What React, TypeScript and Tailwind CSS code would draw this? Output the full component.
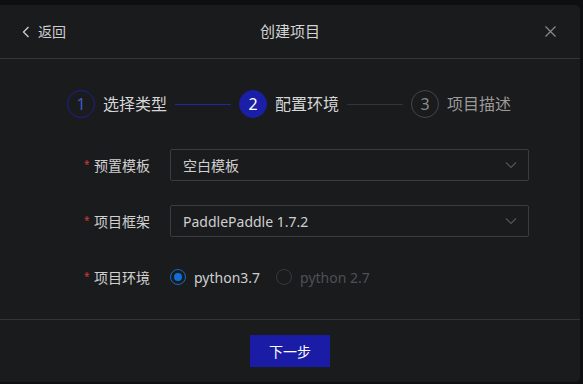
const font = { fontFamily: '"Noto Sans", "Noto Sans CJK SC", sans-serif' };

function Chevron() {
  return (
    <svg width="14" height="14" viewBox="0 0 14 14" fill="none">
      <path d="M2 4.5 L7 9.5 L12 4.5" stroke="#55575b" strokeWidth="1.1" />
    </svg>
  );
}

function Step({ n, label, state }: { n: number; label: string; state: "done" | "active" | "todo" }) {
  const circle =
    state === "active"
      ? "bg-[#1b1ea6] border-[#1b1ea6] text-white"
      : state === "done"
      ? "border-[#1c1f96] text-[#3a5bbd]"
      : "border-[#45474b] text-[#8a8a8a]";
  const text = state === "todo" ? "text-[#9a9a9a]" : "text-[#d6d6d6]";
  return (
    <div className="flex items-center gap-[8px]">
      <div className={`w-[28px] h-[28px] rounded-full border flex items-center justify-center text-[16px] ${circle}`}>
        {n}
      </div>
      <span className={`text-[16px] leading-none whitespace-nowrap ${text}`}>{label}</span>
    </div>
  );
}

function Label({ children }: { children: string }) {
  return (
    <div className="flex items-center w-[66px] shrink-0 whitespace-nowrap">
      <span className="text-[#d33a3a] text-[10px] w-[10px] leading-none -mt-[3px]">*</span>
      <span className="text-[14px] text-[#d0d0d0]">{children}</span>
    </div>
  );
}

function Select({ value }: { value: string }) {
  return (
    <div className="w-[359px] h-[32px] border border-[#3a3c40] rounded-[2px] flex items-center justify-between pl-[12px] pr-[10px]">
      <span className="text-[14px] text-[#cfcfcf]">{value}</span>
      <Chevron />
    </div>
  );
}

export default function App() {
  return (
    <div className="w-[583px] h-[384px] bg-[#0e0f10] pt-[5px] overflow-hidden" style={font}>
      <div className="w-[580px] h-[377px] bg-[#1a1b1d] rounded-r-[5px] flex flex-col">
        {/* header */}
        <div className="h-[54px] border-b border-[#333539] flex items-center justify-between px-[22px] shrink-0">
          <div className="flex items-center gap-[8px] w-[80px] text-[#cfcfcf]">
            <svg width="8" height="12" viewBox="0 0 8 12" fill="none">
              <path d="M6.5 1 L1.5 6 L6.5 11" stroke="#cfcfcf" strokeWidth="1.3" />
            </svg>
            <span className="text-[14px]">返回</span>
          </div>
          <span className="text-[15px] text-[#d4d4d4]">创建项目</span>
          <div className="w-[80px] flex justify-end pr-[2px]">
            <svg width="11" height="11" viewBox="0 0 11 11" fill="none">
              <path d="M0.5 0.5 L10.5 10.5 M10.5 0.5 L0.5 10.5" stroke="#8a8a8a" strokeWidth="1.2" />
            </svg>
          </div>
        </div>

        {/* body */}
        <div className="flex-1 flex flex-col pt-[31px]">
          <div className="flex items-center pl-[67px]">
            <Step n={1} label="选择类型" state="done" />
            <div className="w-[56px] h-px bg-[#2225a8] mx-[8px]" />
            <Step n={2} label="配置环境" state="active" />
            <div className="w-[56px] h-px bg-[#333438] mx-[8px]" />
            <Step n={3} label="项目描述" state="todo" />
          </div>

          <div className="flex flex-col gap-[24px] mt-[31px] pl-[84px]">
            <div className="flex items-center gap-[20px]">
              <Label>预置模板</Label>
              <Select value="空白模板" />
            </div>
            <div className="flex items-center gap-[20px]">
              <Label>项目框架</Label>
              <Select value="PaddlePaddle 1.7.2" />
            </div>
            <div className="flex items-center gap-[20px] h-[32px]">
              <Label>项目环境</Label>
              <div className="flex items-center gap-[16px]">
                <div className="flex items-center gap-[8px]">
                  <div className="w-[16px] h-[16px] rounded-full border border-[#1768c8] flex items-center justify-center">
                    <div className="w-[8px] h-[8px] rounded-full bg-[#0e6fd8]" />
                  </div>
                  <span className="text-[14px] text-[#cfcfcf]">python3.7</span>
                </div>
                <div className="flex items-center gap-[8px]">
                  <div className="w-[16px] h-[16px] rounded-full border border-[#38393d]" />
                  <span className="text-[14px] text-[#4e5054]">python 2.7</span>
                </div>
              </div>
            </div>
          </div>
        </div>

        {/* footer */}
        <div className="h-[63px] border-t border-[#333539] shrink-0 flex items-center pl-[250px]">
          <button className="w-[80px] h-[32px] bg-[#1a1ca6] text-white text-[14px]">下一步</button>
        </div>
      </div>
    </div>
  );
}
